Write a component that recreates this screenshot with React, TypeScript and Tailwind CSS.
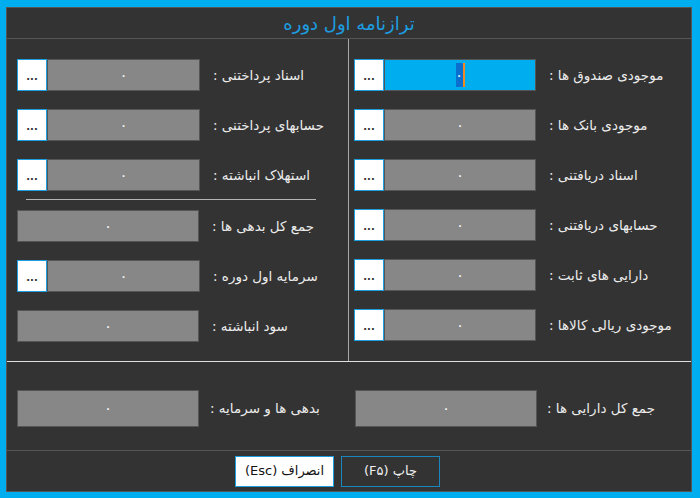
import React from 'react';

const font = { fontFamily: '"DejaVu Sans", "Noto Sans", sans-serif' };

type RowProps = {
  label: string;
  button?: boolean;
  focused?: boolean;
  inputWidth: string;
  fullWidth: string;
};

function ZeroMark({ focused }: { focused?: boolean }) {
  if (focused) {
    return (
      <span className="relative flex h-[24px] items-center">
        <span className="flex h-[24px] w-[7px] items-center justify-center bg-[#0b6fd0] text-[15px] leading-none text-[#e6f3ff]">۰</span>
        <span className="h-[24px] w-[2px] bg-[#f08a24]" />
      </span>
    );
  }
  return <span className="text-[15px] leading-none text-[#f4f4f4]">۰</span>;
}

function Field({ label, button, focused, inputWidth, fullWidth }: RowProps) {
  return (
    <div className="flex h-[32px] items-center">
      {button ? (
        <div className="flex h-[32px] w-[30px] items-end justify-center border border-[#1c9fe0] bg-white pb-[8px] text-[10px] font-bold leading-none text-[#333]">...</div>
      ) : null}
      <div
        className={`flex h-[32px] items-center justify-center border border-[#555] ${focused ? 'bg-[#00adef]' : 'bg-[#878787]'} ${button ? inputWidth : fullWidth}`}
      >
        <ZeroMark focused={focused} />
      </div>
      <span dir="rtl" className="ml-[13px] whitespace-nowrap text-[13.5px] text-[#ececec]">
        {label}
      </span>
    </div>
  );
}

const leftRows = [
  { label: 'اسناد پرداختنی :', button: true },
  { label: 'حسابهای پرداختنی :', button: true },
  { label: 'استهلاک انباشته :', button: true },
];

const leftRowsLower = [
  { label: 'جمع کل بدهی ها :', button: false },
  { label: 'سرمایه اول دوره :', button: true },
  { label: 'سود انباشته :', button: false },
];

const rightRows = [
  { label: 'موجودی صندوق ها :', button: true, focused: true },
  { label: 'موجودی بانک ها :', button: true },
  { label: 'اسناد دریافتنی :', button: true },
  { label: 'حسابهای دریافتنی :', button: true },
  { label: 'دارایی های ثابت :', button: true },
  { label: 'موجودی ریالی کالاها :', button: true },
];

export default function App() {
  return (
    <div style={font} className="h-[498px] w-[700px] bg-[#00adef] pb-[6px] pl-[6px] pr-[8px] pt-[7px]">
      <div className="flex h-full flex-col border border-[#555] bg-[#333333]">
        <div className="flex h-[31px] shrink-0 items-center justify-center border-b border-[#555]">
          <span dir="rtl" className="text-[18px] text-[#1d9de0]">ترازنامه اول دوره</span>
        </div>

        <div className="flex h-[322px] shrink-0">
          <div className="flex w-[341px] flex-col gap-[18px] pl-[10px] pt-[20px]">
            {leftRows.map((row) => (
              <Field key={row.label} label={row.label} button={row.button} inputWidth="w-[153px]" fullWidth="w-[182px]" />
            ))}
            <div className="-mb-[8px] -mt-[10px] ml-[9px] h-[1px] w-[290px] bg-[#b4b4b4]" />
            {leftRowsLower.map((row) => (
              <Field key={row.label} label={row.label} button={row.button} inputWidth="w-[153px]" fullWidth="w-[182px]" />
            ))}
          </div>
          <div className="w-[1px] bg-[#a8a8a8]" />
          <div className="flex flex-1 flex-col gap-[18px] pl-[5px] pt-[20px]">
            {rightRows.map((row) => (
              <Field key={row.label} label={row.label} button={row.button} focused={row.focused} inputWidth="w-[152px]" fullWidth="w-[182px]" />
            ))}
          </div>
        </div>

        <div className="h-[1px] shrink-0 bg-[#e0e0e0]" />

        <div className="flex h-[89px] shrink-0 items-start border-b border-[#555] pt-[28px]">
          <div className="flex w-[342px] items-center pl-[10px]">
            <div className="flex h-[37px] w-[182px] items-center justify-center border border-[#555] bg-[#878787]">
              <ZeroMark />
            </div>
            <span dir="rtl" className="ml-[11px] whitespace-nowrap text-[13.5px] text-[#ececec]">بدهی ها و سرمایه :</span>
          </div>
          <div className="flex items-center pl-[6px]">
            <div className="flex h-[37px] w-[182px] items-center justify-center border border-[#555] bg-[#878787]">
              <ZeroMark />
            </div>
            <span dir="rtl" className="ml-[10px] whitespace-nowrap text-[13.5px] text-[#ececec]">جمع کل دارایی ها :</span>
          </div>
        </div>

        <div className="flex flex-1 items-center gap-[7px] pl-[228px]">
          <button type="button" dir="rtl" className="flex h-[31px] w-[99px] items-center justify-center border border-[#1c9fe0] bg-white text-[13px] text-[#111]">
            انصراف (Esc)
          </button>
          <button type="button" dir="rtl" className="flex h-[31px] w-[99px] items-center justify-center border border-[#1a86bd] bg-[#333333] text-[13px] text-[#f0f0f0]">
            چاپ (F۵)
          </button>
        </div>
      </div>
    </div>
  );
}
